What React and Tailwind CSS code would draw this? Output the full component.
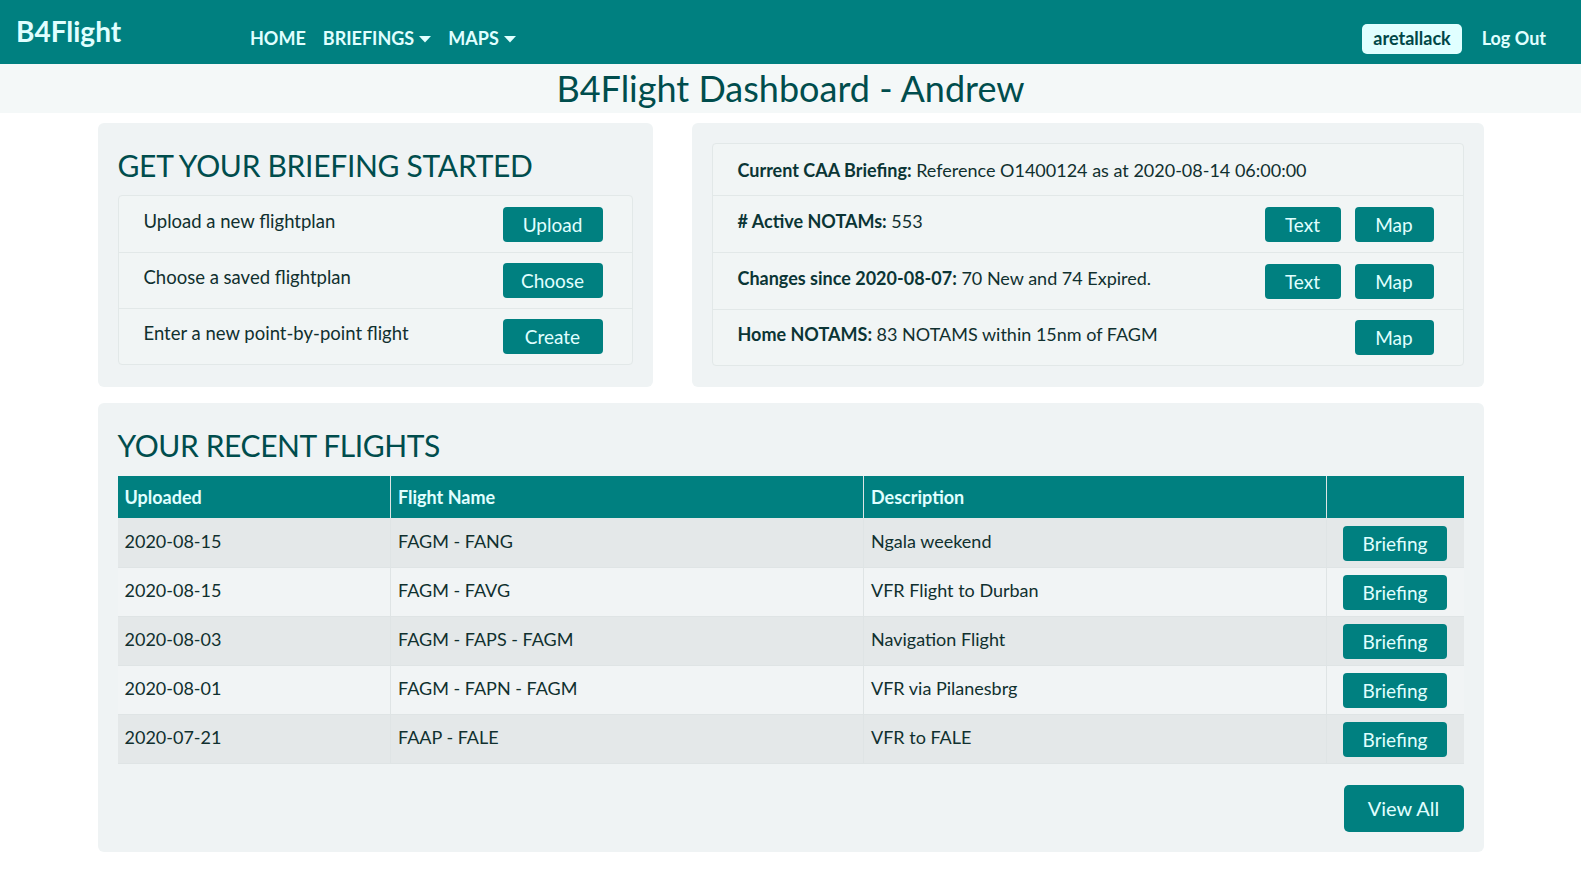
import React from "react";

const font = { fontFamily: "Lato, 'Open Sans', sans-serif" };

function Caret() {
  return (
    <svg width="12" height="7" viewBox="0 0 12 7" className="ml-[5px] mt-[1px]">
      <polygon points="0,0 12,0 6,6.5" fill="#e0ffff" />
    </svg>
  );
}

function Btn({ children, className = "" }) {
  return (
    <button
      className={
        "bg-[#008080] text-[#e0ffff] rounded-[4px] h-[35px] text-[19px] leading-none flex items-center justify-center " +
        className
      }
    >
      {children}
    </button>
  );
}

const flights = [
  ["2020-08-15", "FAGM - FANG", "Ngala weekend"],
  ["2020-08-15", "FAGM - FAVG", "VFR Flight to Durban"],
  ["2020-08-03", "FAGM - FAPS - FAGM", "Navigation Flight"],
  ["2020-08-01", "FAGM - FAPN - FAGM", "VFR via Pilanesbrg"],
  ["2020-07-21", "FAAP - FALE", "VFR to FALE"],
];

export default function App() {
  return (
    <div style={font} className="min-h-[875px] bg-white text-[#10302f]">
      {/* Navbar */}
      <nav className="h-16 bg-[#008080] flex items-center pl-4 pr-[35px]">
        <div className="text-[28px] font-bold text-[#e0ffff] pb-[3px] w-[234px]">B4Flight</div>
        <div className="flex items-center gap-[17px] text-[18px] font-bold text-[#e0ffff] pt-[13px]">
          <span>HOME</span>
          <span className="flex items-center">BRIEFINGS<Caret /></span>
          <span className="flex items-center">MAPS<Caret /></span>
        </div>
        <div className="ml-auto flex items-center gap-[20px] pt-[13px]">
          <span className="bg-[#e0ffff] text-[#004747] font-bold text-[18px] rounded-[5px] h-[30px] px-[11px] flex items-center">
            aretallack
          </span>
          <span className="text-[#e0ffff] font-bold text-[18px]">Log Out</span>
        </div>
      </nav>

      {/* Title bar */}
      <div className="h-[49px] bg-[#f4f8f8] flex items-center justify-center">
        <h1 className="text-[36px] text-[#004d4d] leading-none -mt-[2px]">B4Flight Dashboard - Andrew</h1>
      </div>

      <div className="w-[1386px] mx-auto mt-[10px]">
        <div className="flex gap-[39px]">
          {/* Left card */}
          <div className="w-[555px] bg-[#eff3f4] rounded-[6px] px-[20px] pt-[27px] pb-[21px]">
            <h2 className="text-[30px] text-[#004d4d] leading-none mb-[15px] tracking-[-0.3px]">GET YOUR BRIEFING STARTED</h2>
            <div className="border border-[#e2e8e8] rounded-[4px] bg-[#f1f5f5]">
              {[
                ["Upload a new flightplan", "Upload"],
                ["Choose a saved flightplan", "Choose"],
                ["Enter a new point-by-point flight", "Create"],
              ].map(([t, b], i) => (
                <div
                  key={t}
                  className={
                    "h-[56px] flex items-center pl-[25px] pr-[29px] " +
                    (i > 0 ? "border-t border-[#e2e8e8]" : "")
                  }
                >
                  <span className="text-[18.5px] -mt-[5px]">{t}</span>
                  <Btn className="ml-auto w-[100px]">{b}</Btn>
                </div>
              ))}
            </div>
          </div>

          {/* Right card */}
          <div className="flex-1 bg-[#eff3f4] rounded-[6px] px-[20px] pt-[20px] pb-[21px]">
            <div className="border border-[#e2e8e8] rounded-[4px] bg-[#f1f5f5] text-[18px]">
              <div className="h-[51px] flex items-center pl-[25px]">
                <span className="mt-[1px]"><b className="text-[#0b3535]">Current CAA Briefing:</b> Reference O1400124 as at 2020-08-14 06:00:00</span>
              </div>
              <div className="h-[57px] flex items-center pl-[25px] pr-[29px] border-t border-[#e2e8e8]">
                <span className="-mt-[6px]"><b className="text-[#0b3535]"># Active NOTAMs:</b> 553</span>
                <Btn className="ml-auto w-[76px]">Text</Btn>
                <Btn className="ml-[14px] w-[79px]">Map</Btn>
              </div>
              <div className="h-[57px] flex items-center pl-[25px] pr-[29px] border-t border-[#e2e8e8]">
                <span className="-mt-[6px]"><b className="text-[#0b3535]">Changes since 2020-08-07:</b> 70 New and 74 Expired.</span>
                <Btn className="ml-auto w-[76px]">Text</Btn>
                <Btn className="ml-[14px] w-[79px]">Map</Btn>
              </div>
              <div className="h-[56px] flex items-center pl-[25px] pr-[29px] border-t border-[#e2e8e8]">
                <span className="-mt-[6px]"><b className="text-[#0b3535]">Home NOTAMS:</b> 83 NOTAMS within 15nm of FAGM</span>
                <Btn className="ml-auto w-[79px]">Map</Btn>
              </div>
            </div>
          </div>
        </div>

        {/* Recent flights */}
        <div className="mt-[16px] bg-[#eff3f4] rounded-[6px] px-[20px] pt-[27px] pb-[20px]">
          <h2 className="text-[30px] text-[#004d4d] leading-none mb-[16px] tracking-[-0.4px]">YOUR RECENT FLIGHTS</h2>
          <table className="w-full border-collapse text-[18px]">
            <thead>
              <tr className="bg-[#008080] text-[#e0ffff] h-[42px]">
                <th className="text-left font-bold pl-[7px] w-[273px] border-r border-[#dde5e5]">Uploaded</th>
                <th className="text-left font-bold pl-[7px] w-[473px] border-r border-[#dde5e5]">Flight Name</th>
                <th className="text-left font-bold pl-[7px] w-[463px] border-r border-[#dde5e5]">Description</th>
                <th></th>
              </tr>
            </thead>
            <tbody>
              {flights.map((f, i) => (
                <tr
                  key={i}
                  className={
                    "h-[49px] border-b border-[#dfe4e5] " +
                    (i % 2 === 0 ? "bg-[#e4e8e9]" : "bg-[#f1f4f5]")
                  }
                >
                  <td className="pl-[7px] border-r border-[#dfe4e5] pb-[2px]">{f[0]}</td>
                  <td className="pl-[7px] border-r border-[#dfe4e5] pb-[2px]">{f[1]}</td>
                  <td className="pl-[7px] border-r border-[#dfe4e5] pb-[2px]">{f[2]}</td>
                  <td className="pl-[16px] pt-[2px]">
                    <Btn className="w-[104px]">Briefing</Btn>
                  </td>
                </tr>
              ))}
            </tbody>
          </table>
          <div className="flex justify-end mt-[21px]">
            <button className="bg-[#008080] text-[#e0ffff] rounded-[5px] h-[47px] w-[120px] text-[20px]">View All</button>
          </div>
        </div>
      </div>
    </div>
  );
}
